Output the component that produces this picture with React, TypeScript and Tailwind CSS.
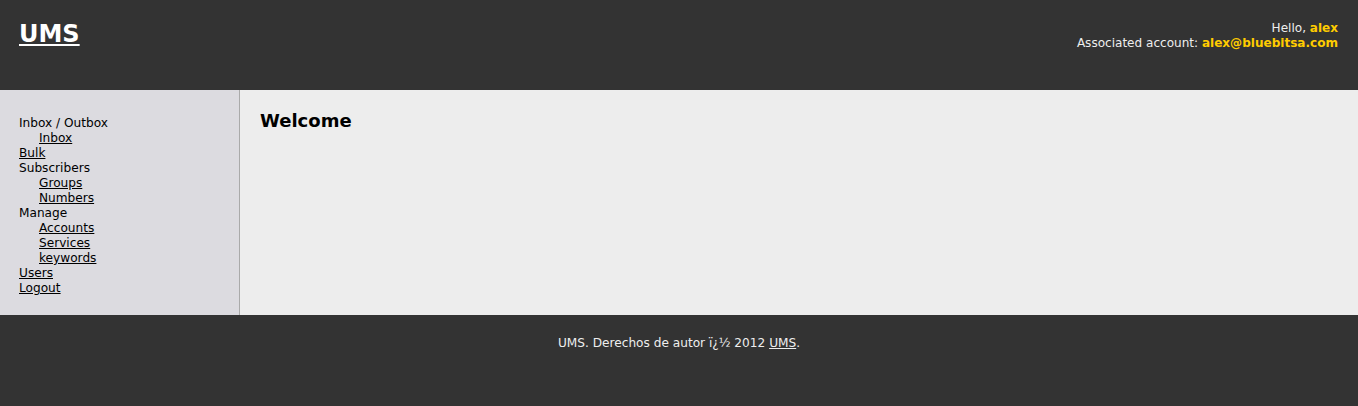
export default function App() {
  const font = { fontFamily: '"DejaVu Sans", sans-serif' };
  return (
    <div className="min-h-screen flex flex-col text-[12.15px] leading-[15px]" style={font}>
      <header className="h-[90px] bg-[#333333] flex justify-between items-start px-[19px]">
        <a href="#" className="mt-[19px] text-[24px] leading-[30px] font-bold text-white underline">
          UMS
        </a>
        <div className="mt-[21px] text-right text-[12.05px] text-[#eeeeee] pr-[1px]">
          <div>
            Hello, <b className="text-[#ffcc00]">alex</b>
          </div>
          <div>
            Associated account: <b className="text-[#ffcc00]">alex@bluebitsa.com</b>
          </div>
        </div>
      </header>
      <div className="flex h-[225px]">
        <nav className="w-[240px] bg-[#dcdbe0] border-r border-[#aaaaaa] pl-[19px] pt-[26px] text-black">
          <div>Inbox / Outbox</div>
          <div className="pl-[20px]"><a href="#" className="underline">Inbox</a></div>
          <div><a href="#" className="underline">Bulk</a></div>
          <div>Subscribers</div>
          <div className="pl-[20px]"><a href="#" className="underline">Groups</a></div>
          <div className="pl-[20px]"><a href="#" className="underline">Numbers</a></div>
          <div>Manage</div>
          <div className="pl-[20px]"><a href="#" className="underline">Accounts</a></div>
          <div className="pl-[20px]"><a href="#" className="underline">Services</a></div>
          <div className="pl-[20px]"><a href="#" className="underline">keywords</a></div>
          <div><a href="#" className="underline">Users</a></div>
          <div><a href="#" className="underline">Logout</a></div>
        </nav>
        <main className="flex-1 bg-[#ededed] px-[20px] pt-[20px]">
          <h1 className="text-[18px] leading-[22px] font-bold text-black">Welcome</h1>
        </main>
      </div>
      <footer className="h-[91px] bg-[#333333] text-[#eeeeee] text-center pt-[21px]">
        UMS. Derechos de autor ï¿½ 2012 <a href="#" className="underline">UMS</a>.
      </footer>
    </div>
  );
}
